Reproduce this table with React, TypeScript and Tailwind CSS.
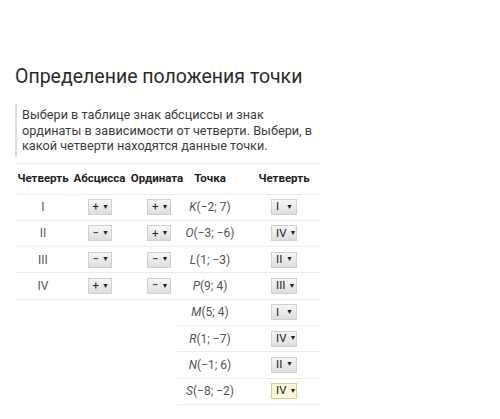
const rows = [
  { q: "I", x: "+", y: "+", p: "K", c: "(−2; 7)", a: "I" },
  { q: "II", x: "−", y: "+", p: "O", c: "(−3; −6)", a: "IV" },
  { q: "III", x: "−", y: "−", p: "L", c: "(1; −3)", a: "II" },
  { q: "IV", x: "+", y: "−", p: "P", c: "(9; 4)", a: "III" },
  { q: "", x: "", y: "", p: "M", c: "(5; 4)", a: "I" },
  { q: "", x: "", y: "", p: "R", c: "(1; −7)", a: "IV" },
  { q: "", x: "", y: "", p: "N", c: "(−1; 6)", a: "II" },
  { q: "", x: "", y: "", p: "S", c: "(−8; −2)", a: "IV" },
];

function Pick({ v, w, active }: { v: string; w: string; active?: boolean }) {
  return (
    <span
      className={`inline-flex h-[16px] items-center justify-between border pl-[4px] pr-[3px] text-[11.5px] leading-none text-[#222] ${w} ${
        active
          ? "border-[#d9cf8f] bg-[#fdf9dc]"
          : "border-[#d0d0d0] bg-gradient-to-b from-[#f6f6f6] to-[#dedede]"
      }`}
    >
      <span>{v}</span>
      <span className="pl-[3px] text-[7px]">▼</span>
    </span>
  );
}

export default function App() {
  return (
    <div
      className="h-[419px] w-[500px] bg-white text-[#333]"
      style={{ fontFamily: "Roboto, 'Noto Sans', sans-serif" }}
    >
      <div className="px-[15px] pt-[66px]">
        <h1 className="text-[19.5px] leading-[22px] text-[#2b2b2b]">
          Определение положения точки
        </h1>
        <div className="mt-[16px] w-[310px] border-l-2 border-[#dcdcdc] py-[3px] pl-[5px] text-[12.7px] leading-[15.5px] text-[#3d3d3d]">
          Выбери в таблице знак абсциссы и знак ординаты в зависимости от
          четверти. Выбери, в какой четверти находятся данные точки.
        </div>

        <div className="mt-[6px] w-[305px] text-[12px] text-[#444]">
          <div className="grid h-[32px] grid-cols-[56px_57px_58px_48px_86px] items-center border-y border-[#ececec] text-[11.5px] font-bold text-[#222]">
            <div className="text-center">Четверть</div>
            <div className="text-center">Абсцисса</div>
            <div className="text-center">Ордината</div>
            <div className="text-center">Точка</div>
            <div className="pl-[14px] text-center">Четверть</div>
          </div>
          {rows.map((r, i) => (
            <div
              key={i}
              className="grid h-[26.3px] grid-cols-[56px_57px_58px_48px_86px] items-center"
            >
              {r.q ? (
                <>
                  <div className="flex h-full items-center justify-center border-b border-[#ececec] text-[#555]">
                    {r.q}
                  </div>
                  <div className="flex h-full items-center justify-center border-b border-[#ececec]">
                    <Pick v={r.x} w="w-[24px]" />
                  </div>
                  <div className="flex h-full items-center justify-center border-b border-[#ececec] pl-[4px]">
                    <Pick v={r.y} w="w-[24px]" />
                  </div>
                </>
              ) : (
                <>
                  <div />
                  <div />
                  <div className="ml-[49px] h-full border-b border-[#ececec]" />
                </>
              )}
              <div className="flex h-full items-center justify-center whitespace-nowrap border-b border-[#ececec] text-[12px] text-[#555]">
                <i>{r.p}</i>
                {r.c}
              </div>
              <div className="flex h-full items-center justify-center border-b border-[#ececec] pl-[14px]">
                <Pick v={r.a} w="w-[26px]" active={i === 7} />
              </div>
            </div>
          ))}
        </div>
      </div>
    </div>
  );
}
